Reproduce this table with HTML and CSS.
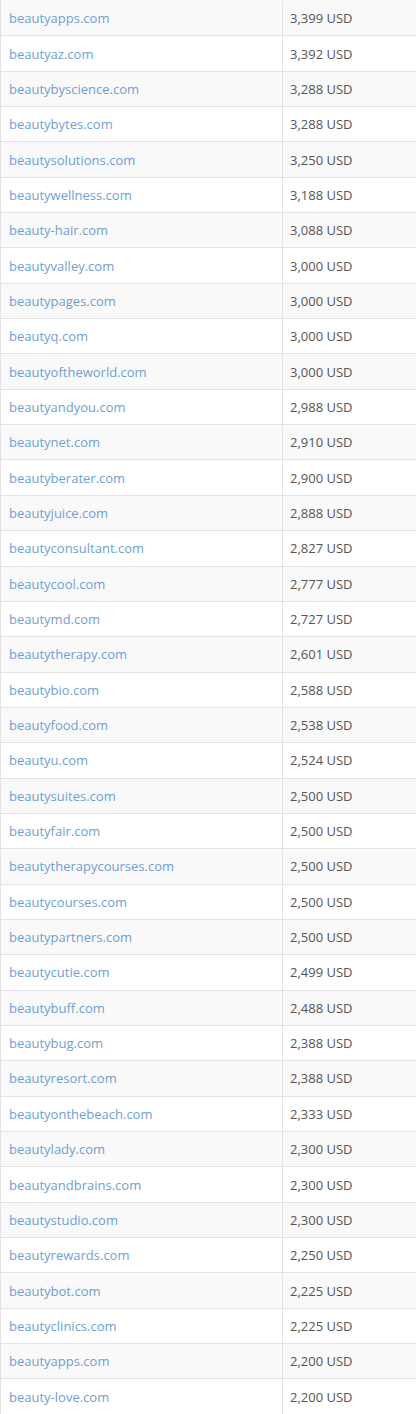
FILE: index.html
```html
<!DOCTYPE html>
<html>
<head>
<meta charset="utf-8">
<link rel="stylesheet" href="styles.css">
</head>
<body>
<div class="table">
<div class="row"><a class="name">beautyapps.com</a><span class="price">3,399 USD</span></div>
<div class="row"><a class="name">beautyaz.com</a><span class="price">3,392 USD</span></div>
<div class="row"><a class="name">beautybyscience.com</a><span class="price">3,288 USD</span></div>
<div class="row"><a class="name">beautybytes.com</a><span class="price">3,288 USD</span></div>
<div class="row"><a class="name">beautysolutions.com</a><span class="price">3,250 USD</span></div>
<div class="row"><a class="name">beautywellness.com</a><span class="price">3,188 USD</span></div>
<div class="row"><a class="name">beauty-hair.com</a><span class="price">3,088 USD</span></div>
<div class="row"><a class="name">beautyvalley.com</a><span class="price">3,000 USD</span></div>
<div class="row"><a class="name">beautypages.com</a><span class="price">3,000 USD</span></div>
<div class="row"><a class="name">beautyq.com</a><span class="price">3,000 USD</span></div>
<div class="row"><a class="name">beautyoftheworld.com</a><span class="price">3,000 USD</span></div>
<div class="row"><a class="name">beautyandyou.com</a><span class="price">2,988 USD</span></div>
<div class="row"><a class="name">beautynet.com</a><span class="price">2,910 USD</span></div>
<div class="row"><a class="name">beautyberater.com</a><span class="price">2,900 USD</span></div>
<div class="row"><a class="name">beautyjuice.com</a><span class="price">2,888 USD</span></div>
<div class="row"><a class="name">beautyconsultant.com</a><span class="price">2,827 USD</span></div>
<div class="row"><a class="name">beautycool.com</a><span class="price">2,777 USD</span></div>
<div class="row"><a class="name">beautymd.com</a><span class="price">2,727 USD</span></div>
<div class="row"><a class="name">beautytherapy.com</a><span class="price">2,601 USD</span></div>
<div class="row"><a class="name">beautybio.com</a><span class="price">2,588 USD</span></div>
<div class="row"><a class="name">beautyfood.com</a><span class="price">2,538 USD</span></div>
<div class="row"><a class="name">beautyu.com</a><span class="price">2,524 USD</span></div>
<div class="row"><a class="name">beautysuites.com</a><span class="price">2,500 USD</span></div>
<div class="row"><a class="name">beautyfair.com</a><span class="price">2,500 USD</span></div>
<div class="row"><a class="name">beautytherapycourses.com</a><span class="price">2,500 USD</span></div>
<div class="row"><a class="name">beautycourses.com</a><span class="price">2,500 USD</span></div>
<div class="row"><a class="name">beautypartners.com</a><span class="price">2,500 USD</span></div>
<div class="row"><a class="name">beautycutie.com</a><span class="price">2,499 USD</span></div>
<div class="row"><a class="name">beautybuff.com</a><span class="price">2,488 USD</span></div>
<div class="row"><a class="name">beautybug.com</a><span class="price">2,388 USD</span></div>
<div class="row"><a class="name">beautyresort.com</a><span class="price">2,388 USD</span></div>
<div class="row"><a class="name">beautyonthebeach.com</a><span class="price">2,333 USD</span></div>
<div class="row"><a class="name">beautylady.com</a><span class="price">2,300 USD</span></div>
<div class="row"><a class="name">beautyandbrains.com</a><span class="price">2,300 USD</span></div>
<div class="row"><a class="name">beautystudio.com</a><span class="price">2,300 USD</span></div>
<div class="row"><a class="name">beautyrewards.com</a><span class="price">2,250 USD</span></div>
<div class="row"><a class="name">beautybot.com</a><span class="price">2,225 USD</span></div>
<div class="row"><a class="name">beautyclinics.com</a><span class="price">2,225 USD</span></div>
<div class="row"><a class="name">beautyapps.com</a><span class="price">2,200 USD</span></div>
<div class="row"><a class="name">beauty-love.com</a><span class="price">2,200 USD</span></div>
</div>
</body>
</html>
```
FILE: styles.css
```css
html, body {
  margin: 0;
  padding: 0;
  background: #ffffff;
}
.table {
  font-family: "Open Sans", "Liberation Sans", sans-serif;
  font-size: 13px;
  border-left: 1px solid #e3e3e3;
  width: 416px;
  box-sizing: border-box;
}
.row {
  display: grid;
  grid-template-columns: 282px 1fr;
  height: 35.35px;
  box-sizing: border-box;
  border-top: 1px solid #e3e3e3;
  background: #ffffff;
}
.row:first-child {
  border-top-color: transparent;
}
.row:nth-child(odd) {
  background: #f9f9f9;
}
.name, .price {
  display: flex;
  align-items: center;
  padding: 0 8px;
  line-height: 18px;
}
.name {
  color: #6f9fd2;
  text-decoration: none;
  border-right: 1px solid #e3e3e3;
}
.price {
  color: #555555;
  padding-left: 7px;
}
```
